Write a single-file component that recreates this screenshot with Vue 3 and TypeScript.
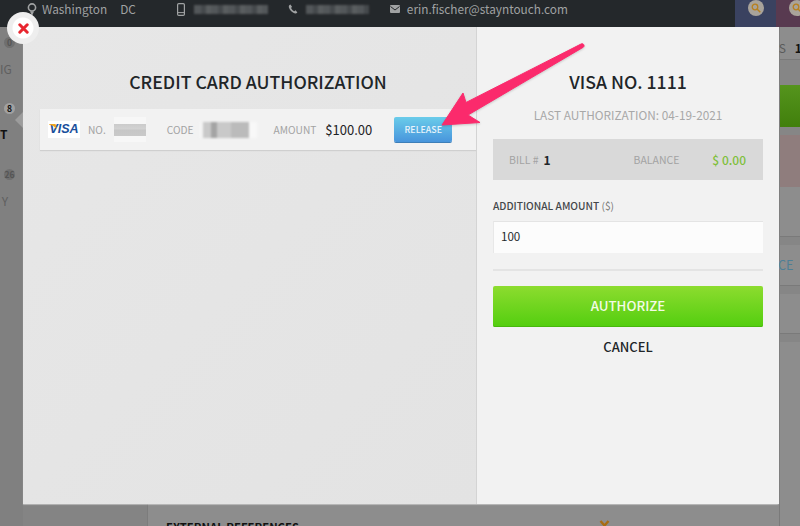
<script setup lang="ts">
const navItems = [
  { badge: '0', label: 'IG', active: false },
  { badge: '8', label: 'T', active: true },
  { badge: '26', label: 'Y', active: false },
]
</script>

<template>
  <div class="page">
    <header class="topbar">
      <div class="contact">
        <svg class="ico" width="12" height="14" viewBox="0 0 12 14">
          <circle cx="6" cy="5.5" r="3.600" fill="none" stroke="#a0a2a3" stroke-width="1.600" />
          <path d="M4 9.500 6 14l2-4.500" fill="#a0a2a3" />
        </svg>
        <span class="city">Washington</span>
        <span class="state">DC</span>
      </div>
      <div class="contact phone">
        <svg width="8" height="13" viewBox="0 0 8 13">
          <rect x="0.600" y="0.600" width="6.800" height="11.800" rx="1.200" fill="none" stroke="#a0a2a3" stroke-width="1.200" />
          <path d="M1 9.600h6" stroke="#a0a2a3" />
        </svg>
        <span class="blur-text b1"></span>
      </div>
      <div class="contact tel">
        <svg width="10" height="10" viewBox="0 0 10 10">
          <path d="M2.400.4C1 1 .5 2.200 1 3.800 2 6.600 4 8.700 7 9.500c.8.2 1.800-.2 2.400-1L7.600 6.300 6.300 7.200C5 6.500 3.700 5.200 3.100 3.900L4 2.700Z" fill="#a0a2a3" />
        </svg>
        <span class="blur-text b2"></span>
      </div>
      <div class="contact mail">
        <svg width="10" height="8" viewBox="0 0 10 8">
          <rect width="10" height="8" rx="1" fill="#a0a2a3" />
          <path d="M.5 1.500 5 5l4.500-3.500" fill="none" stroke="#24282b" />
        </svg>
        <span class="email">erin.fischer@stayntouch.com</span>
      </div>
      <div class="search-tab navy">
        <span class="search-disc">
          <svg width="10" height="10" viewBox="0 0 10 10">
            <circle cx="4" cy="4" r="2.800" fill="none" stroke="#b8801e" stroke-width="1.300" />
            <path d="M6 6l3.300 3.300" stroke="#b8801e" stroke-width="1.500" />
          </svg>
        </span>
      </div>
      <div class="search-tab plum">
        <span class="search-disc">
          <svg width="10" height="10" viewBox="0 0 10 10">
            <circle cx="4" cy="4" r="2.800" fill="none" stroke="#b8801e" stroke-width="1.300" />
            <path d="M6 6l3.300 3.300" stroke="#b8801e" stroke-width="1.500" />
          </svg>
        </span>
      </div>
    </header>

    <div class="behind">
      <aside class="sidenav">
        <div v-for="item in navItems" :key="item.badge" class="nav-item" :class="{ active: item.active }">
          <span class="nav-badge">{{ item.badge }}</span>
          <span class="nav-label">{{ item.label }}</span>
        </div>
      </aside>
      <div class="subnav"></div>
      <main class="content">
        <div class="content-spacer"></div>
        <div class="external">
          <span>EXTERNAL REFERENCES</span>
          <svg class="chevron" width="11" height="8" viewBox="0 0 11 8">
            <path d="M1.500 1 5.500 5.500 9.500 1" fill="none" stroke="#a86c12" stroke-width="2.400" />
          </svg>
        </div>
      </main>
      <div class="right-strip">
        <div class="strip-row first"><span class="strip-text">TS</span><b>1</b></div>
        <div class="band tall"></div>
        <div class="strip-green"></div>
        <div class="band"></div>
        <div class="strip-pink"></div>
        <div class="strip-row gap-row"></div>
        <div class="band"></div>
        <div class="strip-row ce"><span>CE</span></div>
        <div class="band"></div>
        <div class="strip-row last"></div>
        <div class="band"></div>
      </div>
    </div>

    <section class="modal" role="dialog" aria-modal="true">
      <div class="left-pane">
        <h2 class="title">CREDIT CARD AUTHORIZATION</h2>
        <div class="card-row">
          <span class="visa-logo">
            <svg class="visa-swoosh" width="8" height="6" viewBox="0 0 8 6"><path d="M0 0h6.500L8 5.500C6 3 3.500 1.200 0 .6Z" fill="#efa520" /></svg>
            <i>VISA</i>
          </span>
          <span class="muted no">NO.</span>
          <span class="pixel pixel-no"></span>
          <span class="muted code">CODE</span>
          <span class="pixel pixel-code"></span>
          <span class="muted amount">AMOUNT</span>
          <span class="price">$100.00</span>
          <button type="button" class="release">RELEASE</button>
        </div>
      </div>

      <div class="right-pane">
        <h2 class="card-title">VISA NO. 1111</h2>
        <p class="last-auth">LAST AUTHORIZATION: 04-19-2021</p>
        <div class="bill">
          <span class="muted">BILL #</span>
          <b class="bill-no">1</b>
          <span class="muted balance">BALANCE</span>
          <span class="balance-value">$ 0.00</span>
        </div>
        <label class="field-label" for="amount">ADDITIONAL AMOUNT <span>($)</span></label>
        <input id="amount" class="amount-input" type="text" value="100" />
        <div class="divider"></div>
        <button type="button" class="authorize">AUTHORIZE</button>
        <button type="button" class="cancel">CANCEL</button>
      </div>
    </section>

    <button type="button" class="close" aria-label="Close">
      <svg width="11" height="11" viewBox="0 0 11 11">
        <path d="M1.800 1.800 9.200 9.200M9.200 1.800 1.800 9.200" stroke="#e8262f" stroke-width="3" stroke-linecap="round" />
      </svg>
    </button>

    <svg class="arrow" width="160" height="100" viewBox="0 0 160 100">
      <path
        d="M141.500 1.800 C143.500 1 145 4 143.300 5.200 L28 73 L40 80.500 L2 83 L23 51 L26 60.500 Z"
        fill="#fb2a6c"
        stroke="#fb2a6c"
        stroke-width="1"
        stroke-linejoin="round"
      />
    </svg>
  </div>
</template>

<style>
html,
body {
  margin: 0;
  overflow: hidden;
}
</style>

<style scoped>
.page {
  position: relative;
  width: 800px;
  height: 526px;
  overflow: hidden;
  background: #8d8d8d;
  font-family: 'Noto Sans CJK SC', 'Noto Sans', sans-serif;
}

.topbar {
  display: flex;
  align-items: flex-start;
  height: 27px;
  padding-left: 26px;
  box-sizing: border-box;
  overflow: hidden;
  background: #24282b;
  color: #a0a2a3;
  font-size: 11.800px;
  line-height: 18px;
}

.contact {
  display: flex;
  flex: none;
  align-items: center;
  height: 18px;
}

.city {
  margin-left: 4px;
}

.state {
  margin-left: 13px;
}

.phone {
  margin-left: 41px;
  gap: 9px;
}

.tel {
  margin-left: 20px;
  gap: 8px;
}

.mail {
  margin-left: 21px;
  gap: 7px;
}

.blur-text {
  display: block;
  height: 9px;
  background: repeating-linear-gradient(90deg, #53575a 0 7px, #45494c 7px 12px, #5a5e60 12px 17px);
  filter: blur(1px);
}

.b1 {
  width: 74px;
}

.b2 {
  width: 63px;
}

.search-tab {
  display: flex;
  flex: none;
  justify-content: center;
  width: 41px;
  height: 27px;
}

.navy {
  margin-left: auto;
  background: #3a4260;
}

.plum {
  margin-right: -17px;
  background: #583a50;
}

.search-disc {
  display: flex;
  align-items: center;
  justify-content: center;
  width: 16px;
  height: 16px;
  border-radius: 50%;
  background: #a9a39a;
}

.behind {
  display: flex;
  height: 499px;
}

.sidenav {
  width: 23px;
  flex: none;
  background: #808080;
  overflow: hidden;
  color: #5f5f5f;
  font-size: 12px;
  line-height: 14px;
}

.nav-item {
  position: relative;
  height: 66px;
  padding-top: 10px;
  box-sizing: border-box;
}

.nav-badge {
  display: block;
  width: 11px;
  height: 11px;
  margin-left: 4px;
  border-radius: 50%;
  background: #6f6f6f;
  font-size: 8.500px;
  font-weight: 700;
  line-height: 11px;
  text-align: center;
  color: #555;
}

.nav-label {
  display: block;
  margin-top: 14px;
  margin-right: 15px;
  text-align: right;
  white-space: nowrap;
}

.active .nav-badge {
  background: #a0a0a0;
  color: #111;
}

.active .nav-label {
  margin-top: 13px;
  margin-right: 18px;
  color: #111;
  font-weight: 700;
}

/* notch of the selected item */
.active::after {
  content: '';
  position: absolute;
  right: 0;
  top: 19px;
  border-top: 8px solid transparent;
  border-bottom: 8px solid transparent;
  border-right: 8px solid #9c9c9c;
}

.subnav {
  width: 125px;
  flex: none;
  box-sizing: border-box;
  background: #848484;
  border-right: 1px solid #7c7c7c;
}

.content {
  flex: 1;
  display: flex;
  flex-direction: column;
  min-width: 0;
}

.content-spacer {
  height: 493px;
  flex: none;
}

.external {
  display: flex;
  justify-content: space-between;
  padding: 0 169px 0 18px;
  font-size: 11.300px;
  font-weight: 700;
  line-height: 14px;
  color: #111;
}

.chevron {
  flex: none;
}

.right-strip {
  width: 21px;
  flex: none;
  display: flex;
  flex-direction: column;
  box-sizing: border-box;
  border-left: 1px solid #7a7a7a;
  color: #555;
  font-size: 12px;
  line-height: 14px;
}

.strip-row {
  box-sizing: border-box;
  border-bottom: 1px solid #7a7a7a;
}

.band {
  height: 8px;
  flex: none;
  background: #868686;
}

.tall {
  height: 25px;
}

.first {
  display: flex;
  gap: 9px;
  height: 33px;
  padding-top: 14px;
  margin-left: -8px;
  white-space: nowrap;
}

.first b {
  color: #111;
}

.strip-text {
  color: #5a5a5a;
}

.strip-green {
  height: 42px;
  flex: none;
  background: linear-gradient(#55941d, #417f0c);
}

.strip-pink {
  height: 52px;
  flex: none;
  background: #8f7d7d;
}

.gap-row {
  height: 50px;
  flex: none;
}

.ce {
  height: 41px;
  flex: none;
  padding-top: 13px;
  margin-left: -2px;
  color: #4d7f96;
  font-size: 12.500px;
}

.last {
  height: 40px;
  flex: none;
}

.modal {
  position: absolute;
  left: 23px;
  top: 27px;
  width: 756px;
  height: 477px;
  display: flex;
  border-radius: 0 2px 2px 0;
  box-shadow: 0 1px 1px rgba(255, 255, 255, 0.4);
}

.left-pane {
  width: 454px;
  flex: none;
  padding-top: 42px;
  box-sizing: border-box;
  background: linear-gradient(135deg, #e7e7e7, #e3e3e3);
  border-right: 1px solid #d4d4d4;
}

.title {
  margin: 0 0 0 17px;
  text-align: center;
  color: #212528;
  font-size: 17.700px;
  font-weight: 500;
  line-height: 24px;
}

.card-row {
  display: flex;
  align-items: center;
  height: 41px;
  margin: 16px 0 0 17px;
  background: #f2f2f2;
  box-shadow: 0 1px 1px #cfcfcf;
  font-size: 10.200px;
  line-height: 16px;
}

.visa-logo {
  position: relative;
  display: block;
  width: 32px;
  height: 17px;
  margin-left: 8px;
  background: #fff;
  text-align: center;
  color: #1a4f9c;
  font-family: 'Liberation Sans', sans-serif;
  font-size: 12.500px;
  font-weight: 700;
  line-height: 17px;
}

.visa-swoosh {
  position: absolute;
  left: 1px;
  top: 3px;
}

.muted {
  color: #a3a3a3;
}

.no {
  margin-left: 8px;
}

.pixel {
  display: block;
  background-color: #f7f7f7;
}

.pixel-no {
  width: 32px;
  height: 25px;
  margin-left: 8px;
  background-image: linear-gradient(#f7f7f7 7px, #cbcbcb 7px, #d2d2d2 12px, #c6c6c6 13px, #c9c9c9 19px, #f7f7f7 19px);
  filter: blur(0.600px);
}

.code {
  margin-left: 21px;
}

.pixel-code {
  width: 58px;
  height: 16px;
  margin-left: 5px;
  background-image: linear-gradient(90deg, #f4f4f4 0 4px, #c9c9c9 4px 12px, #a4a4a4 12px 18px, #c9c9c9 18px 32px, #bbb 32px 50px, #f8f8f8 50px);
  filter: blur(0.800px);
}

.amount {
  margin-left: 17px;
}

.price {
  margin-left: 9px;
  color: #1f2326;
  font-size: 13px;
}

.release {
  width: 58px;
  height: 25px;
  margin-left: 22px;
  padding: 0;
  border: 0;
  border-radius: 2px;
  background: linear-gradient(#6accea, #4895dc);
  box-shadow: 0 1px 0 #3e7fb8;
  color: #e8f4fb;
  font-family: inherit;
  font-size: 8.800px;
  font-weight: 500;
  line-height: 14px;
}

.right-pane {
  flex: 1;
  min-width: 0;
  padding: 42px 16px 0;
  box-sizing: border-box;
  background: #f2f2f2;
}

.card-title {
  margin: 0;
  text-align: center;
  color: #212528;
  font-size: 17.700px;
  font-weight: 500;
  line-height: 24px;
}

.last-auth {
  margin: 14px 0 0;
  text-align: center;
  color: #a8a8a8;
  font-size: 11.800px;
  line-height: 16px;
}

.bill {
  display: flex;
  align-items: center;
  height: 41px;
  margin-top: 16px;
  padding: 0 17px 0 16px;
  background: #d9d9d9;
  font-size: 10.500px;
  line-height: 16px;
}

.bill-no {
  margin-left: 5px;
  color: #212528;
  font-size: 12px;
}

.balance {
  margin-left: auto;
}

.balance-value {
  margin-left: 33px;
  color: #7ebf3a;
  font-size: 12px;
  font-weight: 500;
}

.field-label {
  display: block;
  margin-top: 18px;
  color: #44474a;
  font-size: 10.200px;
  font-weight: 500;
  line-height: 16px;
}

.field-label span {
  font-weight: 400;
  color: #777;
}

.amount-input {
  display: block;
  width: 100%;
  height: 32px;
  margin-top: 7px;
  padding: 0 7px 3px;
  box-sizing: border-box;
  border: 0;
  border-top: 1px solid #e4e4e4;
  border-left: 1px solid #e8e8e8;
  background: #fcfcfc;
  color: #24282b;
  font-family: inherit;
  font-size: 11.600px;
  outline: none;
}

.divider {
  height: 2px;
  margin-top: 16px;
  background: #e4e4e4;
}

.authorize {
  display: block;
  width: 100%;
  height: 41px;
  margin-top: 15px;
  padding: 0 0 2px;
  border: 0;
  border-radius: 2px;
  background: linear-gradient(#8ddc2f, #53ce0f);
  box-shadow: inset 0 -1px 0 #48b80d;
  color: #f3fbe6;
  font-family: inherit;
  font-size: 13.300px;
  font-weight: 500;
  line-height: 18px;
}

.cancel {
  display: block;
  width: 100%;
  margin-top: 11px;
  padding: 0;
  border: 0;
  background: none;
  color: #212528;
  font-family: inherit;
  font-size: 13px;
  font-weight: 500;
  line-height: 18px;
}

.close {
  position: absolute;
  left: 7px;
  top: 12px;
  display: flex;
  align-items: center;
  justify-content: center;
  width: 32px;
  height: 32px;
  padding: 0;
  border: 0;
  border-radius: 50%;
  background: radial-gradient(circle, #fff 0 10px, #eee 11px);
}

.arrow {
  position: absolute;
  left: 440px;
  top: 42px;
  filter: drop-shadow(0 1px 1px rgba(0, 0, 0, 0.18));
}
</style>
